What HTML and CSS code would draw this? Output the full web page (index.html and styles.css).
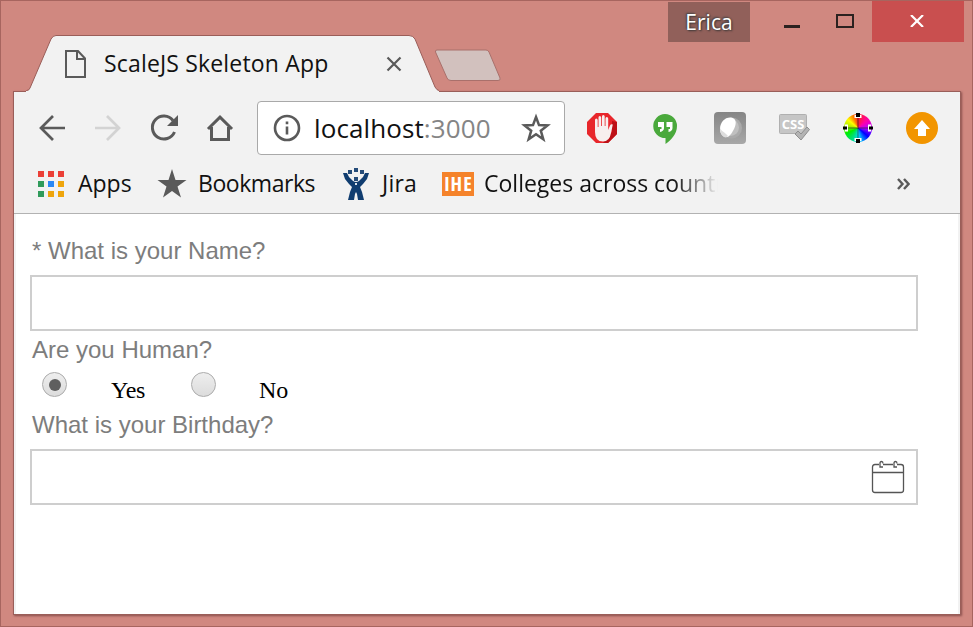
FILE: index.html
```html
<!DOCTYPE html>
<html lang="en">
<head>
<meta charset="utf-8">
<title>ScaleJS Skeleton App</title>
<link rel="stylesheet" href="styles.css">
</head>
<body>
<div class="window">
  <header class="titlebar">
    <div class="tab">
      <svg class="tab-shape" width="413" height="57" viewBox="0 0 413 57"><path d="M0 56H0.5Q3 56 4 53L25 4Q27 .5 30 .5H383Q387 .5 389 4L409 52Q411 55.5 413 55.5V57H0Z" fill="#f2f2f2"/><path d="M0 55.5H.5Q3 55.5 4 53L25 4Q27 .5 30 .5H383Q387 .5 389 4L409 52Q411 55.5 413 55.5" fill="none" stroke="#9a5e59"/></svg>
      <svg class="tab-doc" width="22" height="28" viewBox="0 0 22 28" fill="none" stroke="#5a5a5a" stroke-width="2"><path d="M1 1H13L20 8.500V27H1Z"/><path d="M12 1V9H20"/></svg>
      <span class="tab-title">ScaleJS Skeleton App</span>
      <svg class="tab-close" width="16" height="16" viewBox="0 0 16 16" stroke="#5a5a5a" stroke-width="2.200"><path d="M1.500 1.500 14.500 14.500M14.500 1.500 1.500 14.500"/></svg>
    </div>
    <svg class="new-tab" width="68" height="33" viewBox="0 0 68 33"><path d="M3 1H52Q54 1 55 3L66 29Q67 31.500 64 31.500H17Q14 31.500 13 29L1.500 3Q1 1 3 1Z" fill="#d2c1be" stroke="#a9706b"/></svg>
    <div class="controls">
      <span class="user">Erica</span>
      <svg class="minimize" width="16" height="3"><rect width="16" height="3" fill="#2b2220"/></svg>
      <svg class="maximize" width="18" height="14"><rect x="1" y="1" width="16" height="12" fill="none" stroke="#2b2220" stroke-width="2"/></svg>
      <span class="close"><svg width="14" height="12" viewBox="0 0 14 12" stroke="#fff" stroke-width="2.200"><path d="M1 0 13 12M13 0 1 12"/></svg></span>
    </div>
  </header>
  <main class="frame">
    <nav class="toolbar">
      <div class="nav-icons">
        <svg width="32" height="32" viewBox="0 0 32 32" fill="none" stroke="#5a5a5a" stroke-width="2.700"><path d="M29 16H5M17 4 5 16 17 28"/></svg>
        <svg width="32" height="32" viewBox="0 0 32 32" fill="none" stroke="#d3d3d3" stroke-width="2.700"><path d="M3 16H27M15 4 27 16 15 28"/></svg>
        <svg width="32" height="32" viewBox="0 0 32 32" fill="none" stroke="#5a5a5a" stroke-width="3"><path d="M25 8.500A11.500 11.500 0 1 0 26.500 20"/><path d="M30 3V14H19Z" fill="#5a5a5a" stroke="none"/></svg>
        <svg width="32" height="32" viewBox="0 0 32 32" fill="none" stroke="#5a5a5a" stroke-width="3"><path d="M4 17 16 5.200 28 17"/><path d="M7.500 15V27.500H24.500V15"/></svg>
      </div>
      <div class="omnibox">
        <svg width="28" height="28" viewBox="0 0 28 28" fill="none" stroke="#5a5a5a" stroke-width="2.600"><circle cx="14" cy="14" r="12"/><path d="M14 12.500V20.500M14 7.500V10.300"/></svg>
        <span class="url">localhost<span class="port">:3000</span></span>
        <svg width="30" height="30" viewBox="0 0 30 30" fill="none" stroke="#5a5a5a" stroke-width="2.500"><path d="M15 4 18 12.100 26.500 12.400 19.800 17.700 22.300 26.200 15 21.300 7.700 26.200 10.200 17.700 3.500 12.400 12 12.100Z"/></svg>
      </div>
      <div class="extensions">
        <svg width="32" height="32" viewBox="0 0 32 32"><path d="M10 1H22L31 10V22L22 31H10L1 22V10Z" fill="#e8262b"/><path d="M31 10V22L22 31H17L26 20V9Z" fill="#bd1117"/><path d="M9 20V8Q9 6.500 10.300 6.500T11.700 8V15H12.500V5.500Q12.500 4 13.800 4T15.200 5.500V14H16V4.500Q16 3 17.300 3T18.700 4.500V14H19.500V6.500Q19.500 5 20.800 5T22.200 6.500V18L24 13.500Q25 11.500 26.800 12.500L25 21Q23.500 29.500 17 29.500Q9 29.500 9 20Z" fill="#f7efee"/></svg>
        <svg width="32" height="32" viewBox="0 0 32 32"><path d="M15 2A12 12 0 0 1 27 14C27 22 21 28 15.500 32V26A12 12 0 0 1 15 2Z" fill="#4aa93c"/><path d="M8 10H14V16Q14 19 10 20V17H11.500V15H8ZM16.500 10H22.500V16Q22.500 19 18.500 20V17H20V15H16.500Z" fill="#fff"/></svg>
        <svg width="32" height="32" viewBox="0 0 32 32"><defs><linearGradient id="plate" x2="0" y2="1"><stop stop-color="#858585"/><stop offset="1" stop-color="#a8a8a8"/></linearGradient></defs><rect width="32" height="32" rx="4" fill="url(#plate)"/><circle cx="17.500" cy="16" r="10.500" fill="#aaa"/><circle cx="16.500" cy="15.500" r="8.500" fill="#c0c0c0"/><path d="M6 17C6 10 11 5 17 5.500C22 6 23 11 20 17C17 23 14 26 11 25C8 24 6 21 6 17Z" fill="#fff"/><path d="M6 16C8 20 11 20 14 24Q12 26 10 25C7 23 6 20 6 16Z" fill="#ddd"/></svg>
        <svg width="32" height="32" viewBox="0 0 32 32"><rect x="1.500" y="2.500" width="27" height="19" rx="1" fill="#c6c6c6" stroke="#b0b0b0"/><text class="css-text" x="15" y="17" text-anchor="middle">CSS</text><path d="M17 22 20 19 23 22 29 15 31.500 17.500 23 28Z" fill="#b4b4b4" stroke="#8f8f8f"/></svg>
        <span class="wheel"><svg width="32" height="32" viewBox="0 0 32 32"><path d="M16 3V29M3 16H29" stroke="#222" stroke-opacity=".65"/><path d="M12.500 3V6H19.500V3M12.500 29V26H19.500V29M3 12.500H6V19.500H3M29 12.500H26V19.500H29" fill="#fff"/><path d="M14 1H18V5H14ZM14 27H18V31H14ZM1 14.500H5V17.500H1ZM27 14.500H31V17.500H27Z" fill="#000"/></svg></span>
        <svg width="32" height="32" viewBox="0 0 32 32"><circle cx="16" cy="16" r="16" fill="#f29500"/><path d="M16 8 24 17H20V24H12V17H8Z" fill="#fff"/></svg>
      </div>
    </nav>
    <nav class="bookmarks">
      <svg class="apps-icon" width="26" height="26" viewBox="0 0 26 26"><path d="M0 0h6v6H0zM10 0h6v6h-6zM20 0h6v6h-6z" fill="#eb4037"/><path d="M0 10h6v6H0zM0 20h6v6H0z" fill="#309b5b"/><path d="M10 10h6v6h-6z" fill="#2a88f4"/><path d="M20 10h6v6h-6zM10 20h6v6h-6zM20 20h6v6h-6z" fill="#eea50d"/></svg>
      <span class="bm apps">Apps</span>
      <svg class="star-icon" width="30" height="30" viewBox="0 0 30 30"><path d="M15 0 18.500 11H29.500L20.500 17.500 24 28.500 15 22 6 28.500 9.500 17.500 .5 11H11.500Z" fill="#5a5a5a"/></svg>
      <span class="bm book">Bookmarks</span>
      <svg class="jira-icon" width="26" height="32" viewBox="0 0 26 32"><path d="M11 0h4v4h-4zM5 2h4v4H5zM17 2h4v4h-4zM11 9h4v4h-4z" fill="#254c79"/><path d="M0 5H4L6 9L10 13Q13 15 16 13L20 9L22 5H26L24 11L20 16L17 19L19 24L21 32H15L14 26L13 24L12 26L11 32H5L7 24L9 19L6 16L2 11Z" fill="#103d70"/><path d="M12 15h2v2h-2z" fill="#dfe5eb"/></svg>
      <span class="bm jira">Jira</span>
      <span class="ihe">IHE</span>
      <span class="bm colleges">Colleges across countr</span>
      <svg class="more" width="13" height="12" viewBox="0 0 13 12" fill="none" stroke="#5a5a5a" stroke-width="2.400"><path d="M1 1 5.500 6 1 11M7 1 11.500 6 7 11"/></svg>
    </nav>
    <form class="page">
      <label class="question" for="name">* What is your Name?</label>
      <input class="field" id="name" type="text">
      <span class="question human">Are you Human?</span>
      <div class="choices">
        <span class="radio on"></span><span class="answer yes">Yes</span>
        <span class="radio"></span><span class="answer no">No</span>
      </div>
      <span class="question birthday">What is your Birthday?</span>
      <div class="field date">
        <svg width="34" height="34" viewBox="0 0 34 34" fill="none" stroke="#555" stroke-width="1.300"><path d="M8 4.500H4Q1.500 4.500 1.500 7V30Q1.500 32.500 4 32.500H30Q32.500 32.500 32.500 30V7Q32.500 4.500 30 4.500H26M12 4.500H22M1.500 12.500H32.500"/><path d="M12 7H9V3Q9 1.500 10.500 1.500T12 3.500M26 7H23V3Q23 1.500 24.500 1.500T26 3.500"/></svg>
      </div>
    </form>
  </main>
</div>
</body>
</html>
```
FILE: styles.css
```css
* { box-sizing: border-box; }
body { margin: 0; overflow: hidden; }
svg { display: block; flex: none; }
.window {
  width: 973px; height: 627px;
  padding: 0 12px 12px;
  border: 1px solid #a7655f;
  background: #d08880;
  font-family: "Open Sans", sans-serif;
  color: #111;
}
.titlebar { display: flex; height: 91px; padding-left: 13px; align-items: flex-end; }
.tab {
  position: relative; z-index: 1;
  display: flex; align-items: center;
  width: 413px; height: 57px; padding: 0 0 1px 39px;
}
.tab-shape { position: absolute; left: 0; top: 0; }
.tab-doc, .tab-title, .tab-close { position: relative; }
.tab-title { width: 282px; margin-left: 17px; font-size: 23px; line-height: 32px; letter-spacing: .17px; white-space: nowrap; }
.tab-doc, .tab-close { margin-top: 1px; }
.new-tab { margin: 0 0 10px -5px; }
.controls { display: flex; align-self: flex-start; margin-left: auto; margin-right: -4px; height: 41px; }
.user {
  width: 82px; height: 40px; margin-top: 1px;
  background: #91605a; color: #fff;
  font-size: 21px; line-height: 41px; text-align: center;
  text-shadow: 1px 1px 2px #333, -1px -1px 2px #444;
}
.minimize { margin: 24px 0 0 34px; }
.maximize { margin: 13px 0 0 36px; }
.close { display: flex; width: 92px; height: 41px; margin-left: 18px; align-items: center; justify-content: center; background: #c94f4f; }
.close svg { margin: 0 2px 1px 0; }
.frame {
  height: 522px; margin: 0 0 0 1px; width: 946px;
  background: #f2f2f2;
  box-shadow: 0 0 0 1px #9a5e59, 1px 1px 2px 1px #8a504c;
}
.toolbar { display: flex; align-items: center; height: 71px; padding-left: 22px; }
.nav-icons { display: flex; gap: 24px; }
.omnibox {
  display: flex; align-items: center;
  width: 308px; height: 54px; margin: 1px 21px 0; padding: 0 13px 0 15px;
  background: #fff; border: 1px solid #a9a9a9; border-radius: 4px;
}
.url { width: 208px; margin: -1px 0 0 13px; font-size: 26px; line-height: 36px; letter-spacing: .1px; white-space: nowrap; }
.port { color: #858585; }
.extensions { display: flex; gap: 32px; }
.css-text { font: bold 13px "Open Sans", sans-serif; fill: #fff; }
.wheel {
  width: 32px; height: 32px;
  background: radial-gradient(circle, transparent 13.500px, #f2f2f2 14.500px), conic-gradient(#f22, #f0a 50deg, #b0f 90deg, #00f 130deg, #0df 175deg, #0d8 205deg, #0e0 245deg, #ae0 280deg, #ff0 310deg, #f80 335deg, #f22);
}
.bookmarks { display: flex; align-items: center; height: 51px; padding: 0 0 9px 24px; border-bottom: 1px solid #b2b2b2; }
.bm { margin-top: -1px; font-size: 23px; line-height: 32px; white-space: nowrap; }
.apps { width: 66px; margin-left: 14px; }
.star-icon { margin-left: 13px; }
.book { width: 132px; margin-left: 11px; letter-spacing: -.45px; }
.jira-icon { margin-left: 13px; }
.jira { width: 48px; margin-left: 13px; letter-spacing: .2px; }
.ihe {
  flex: none; width: 32px; height: 24px; margin-left: 12px;
  background: #f5832b; color: #fff;
  font: bold 20px/24px "Open Sans", sans-serif; font-stretch: 75%; text-align: center;
  letter-spacing: 1px; padding-left: 1px;
}
.colleges {
  width: 234px; margin-left: 10px; overflow: hidden;
  -webkit-mask-image: linear-gradient(90deg, #000 190px, transparent);
  mask-image: linear-gradient(90deg, #000 190px, transparent);
}
.more { margin-left: 179px; }
.page { display: flex; flex-direction: column; height: 400px; margin: 0 2px; padding: 20px 0 0 14px; background: #fff; }
.question { margin-left: 2px; font: 24px/34px "Liberation Sans", sans-serif; color: #7d7d7d; }
.field { flex: none; width: 888px; height: 56px; margin: 7px 0 0; padding: 0; border: 2px solid #cecece; background: #fff; }
.human { margin-top: 2px; }
.choices { display: flex; height: 38px; padding: 5px 0 0 12px; }
.radio { display: grid; place-items: center; width: 25px; height: 25px; border: 1px solid #ababab; border-radius: 50%; background: linear-gradient(#eee, #dcdcdc); }
.on::after { content: ""; width: 12px; height: 12px; border-radius: 50%; background: #5f5f5f; }
.answer { font: 24px/28px "Liberation Serif", serif; color: #000; margin-top: 4px; }
.yes { width: 80px; margin-left: 44px; letter-spacing: -.3px; }
.no { margin-left: 43px; }
.birthday { margin-top: 3px; }
.date { display: flex; align-items: center; justify-content: flex-end; padding-right: 11px; }
```
